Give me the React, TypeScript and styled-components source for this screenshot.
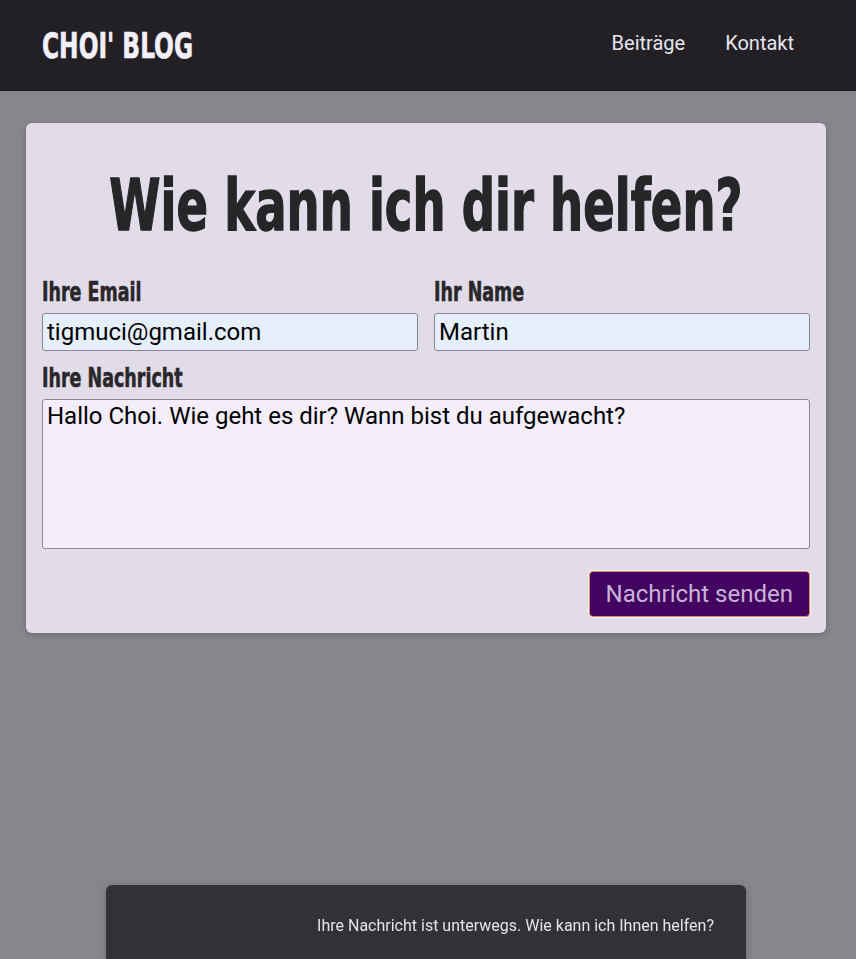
import React from "react";
import styled, { createGlobalStyle } from "styled-components";

const Global = createGlobalStyle`
  html, body { margin: 0; padding: 0; }
  body {
    background: #88858b;
    font-family: Roboto, "Liberation Sans", sans-serif;
    min-height: 959px;
  }
  * { box-sizing: border-box; }
`;

const display = `"DejaVu Sans Condensed", "Liberation Sans", sans-serif`;

/* Condensed display text: squeezed horizontally to mimic a tall narrow grotesque */
const Squeeze = styled.span<{ $origin?: string; $scale?: number; $stroke?: number }>`
  display: inline-block;
  white-space: nowrap;
  transform: scaleX(${(p) => p.$scale ?? 0.72});
  transform-origin: ${(p) => p.$origin ?? "left"} center;
  -webkit-text-stroke: ${(p) => p.$stroke ?? 0.6}px currentColor;
`;

const NavBar = styled.header`
  height: 91px;
  background: #222024;
  display: flex;
  align-items: center;
  justify-content: space-between;
  padding: 0 42px;
`;

const Logo = styled.div`
  font-family: ${display};
  font-weight: 700;
  font-size: 36px;
  line-height: 40px;
  color: #f3eff8;
  width: 150px;
`;

const NavLinks = styled.nav`
  display: flex;
  gap: 40px;
  margin: 0 20px 6px 0;
`;

const NavLink = styled.a`
  font-family: Roboto, sans-serif;
  font-size: 20px;
  color: #e8e4ee;
  text-decoration: none;
`;

const Main = styled.main`
  padding: 32px 30px 0 26px;
`;

const Card = styled.section`
  background: #e1dce7;
  border-radius: 6px;
  box-shadow: 0 2px 6px rgba(0, 0, 0, 0.18);
  padding: 43px 16px 16px;
  display: flex;
  flex-direction: column;
`;

const Title = styled.h1`
  margin: 0 0 31px;
  display: flex;
  justify-content: center;
  font-family: ${display};
  font-weight: 700;
  font-size: 71px;
  line-height: 80px;
  color: #262528;
`;

const Row = styled.div`
  display: grid;
  grid-template-columns: 1fr 1fr;
  gap: 16px;
`;

const Field = styled.label`
  display: flex;
  flex-direction: column;
  margin-bottom: 12px;
`;

const Label = styled.span`
  font-family: ${display};
  font-weight: 700;
  font-size: 27px;
  line-height: 30px;
  color: #29272a;
  margin-bottom: 6px;
`;

const Input = styled.input`
  height: 38px;
  background: #e6f0fc;
  border: 1px solid #8a878d;
  border-radius: 3px;
  font-family: Roboto, sans-serif;
  font-size: 24px;
  color: #000;
  padding: 0 4px;
  outline: none;
`;

const TextArea = styled.textarea`
  height: 150px;
  background: #f3eefa;
  border: 1px solid #8a878d;
  border-radius: 3px;
  font-family: Roboto, sans-serif;
  font-size: 24px;
  color: #000;
  padding: 2px 4px;
  resize: none;
  outline: none;
`;

const Actions = styled.div`
  display: flex;
  justify-content: flex-end;
  margin-top: 10px;
`;

const SendButton = styled.button`
  height: 46px;
  padding: 0 16px;
  background: #430360;
  color: #c9b3d8;
  font-family: Roboto, sans-serif;
  font-size: 24px;
  border: 1px solid #e2885c;
  border-radius: 4px;
  box-shadow: 0 0 0 1px rgba(255, 255, 255, 0.7);
  cursor: pointer;
`;

const Toast = styled.div`
  position: fixed;
  left: 106px;
  bottom: -20px;
  width: 640px;
  height: 94px;
  background: #333136;
  border-radius: 6px;
  display: flex;
  justify-content: flex-end;
  padding: 31px 32px 0 0;
  color: #e6e2ea;
  font-family: Roboto, sans-serif;
  font-size: 16px;
  box-shadow: 0 2px 8px rgba(0, 0, 0, 0.2);
`;

export default function App() {
  return (
    <>
      <Global />
      <NavBar>
        <Logo>
          <Squeeze>CHOI' BLOG</Squeeze>
        </Logo>
        <NavLinks>
          <NavLink href="#">Beiträge</NavLink>
          <NavLink href="#">Kontakt</NavLink>
        </NavLinks>
      </NavBar>
      <Main>
        <Card>
          <Title>
            <Squeeze $origin="center" $scale={0.728} $stroke={1.4}>
              Wie kann ich dir helfen?
            </Squeeze>
          </Title>
          <Row>
            <Field>
              <Label>
                <Squeeze>Ihre Email</Squeeze>
              </Label>
              <Input type="email" defaultValue="tigmuci@gmail.com" />
            </Field>
            <Field>
              <Label>
                <Squeeze>Ihr Name</Squeeze>
              </Label>
              <Input type="text" defaultValue="Martin" />
            </Field>
          </Row>
          <Field>
            <Label>
              <Squeeze>Ihre Nachricht</Squeeze>
            </Label>
            <TextArea defaultValue="Hallo Choi. Wie geht es dir? Wann bist du aufgewacht?" />
          </Field>
          <Actions>
            <SendButton type="button">Nachricht senden</SendButton>
          </Actions>
        </Card>
      </Main>
      <Toast>Ihre Nachricht ist unterwegs. Wie kann ich Ihnen helfen?</Toast>
    </>
  );
}
